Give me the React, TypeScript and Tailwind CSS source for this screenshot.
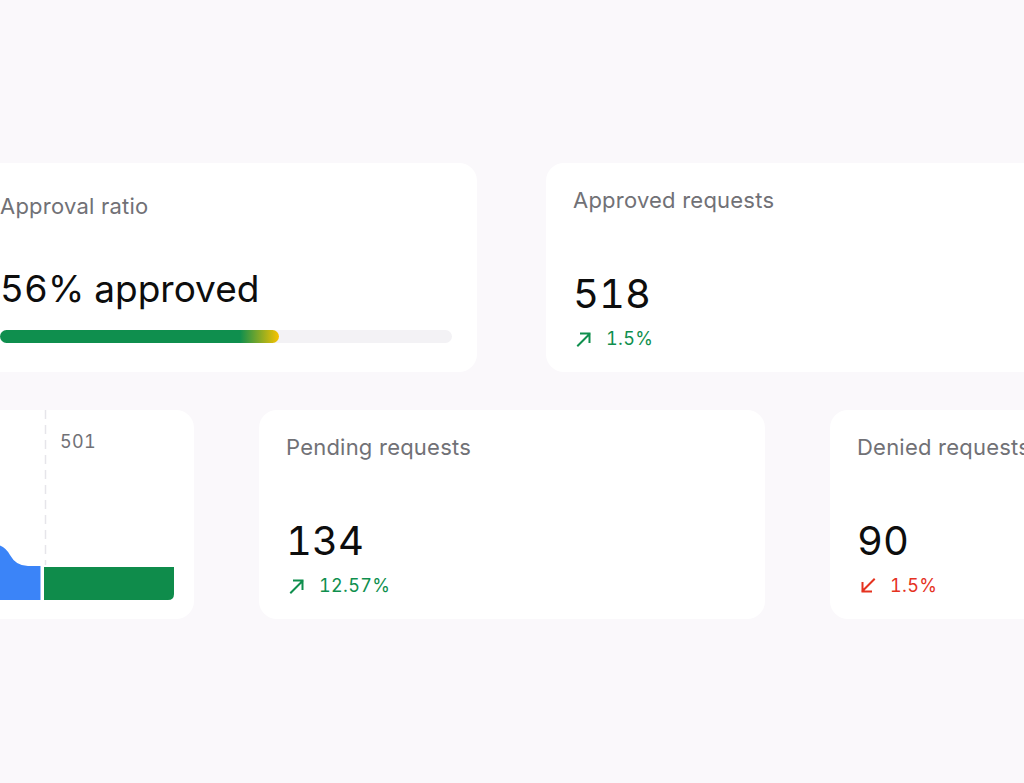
const font = { fontFamily: 'Inter, "Noto Sans", sans-serif' };

function UpArrow() {
  return (
    <svg width="16" height="16" viewBox="0 0 16 16" fill="none" stroke="currentColor" strokeWidth="2" strokeLinecap="square">
      <path d="M2 14.5 L13.5 3 M5 2.5 H13.5 V11" />
    </svg>
  );
}

function DownArrow() {
  return (
    <svg width="16" height="16" viewBox="0 0 16 16" fill="none" stroke="currentColor" strokeWidth="2" strokeLinecap="square">
      <path d="M14 1.5 L2.5 13 M2.5 5 V13.5 H11" />
    </svg>
  );
}

type StatProps = { title: string; value: string; change: string; up: boolean; width: string };

function StatCard({ title, value, change, up, width }: StatProps) {
  return (
    <div className={`${width} h-[209px] shrink-0 rounded-[18px] bg-white pl-[27px] pt-[23px] flex flex-col`}>
      <div className="text-[22px] leading-[28px] text-[#717176] tracking-[0.01em] whitespace-nowrap">{title}</div>
      <div className="mt-[56px] text-[40px] leading-[48px] text-[#0d0d0d] tabular-nums">{value}</div>
      <div className={`mt-[9px] flex items-center gap-[14px] text-[18px] leading-[24px] tracking-[0.02em] tabular-nums ${up ? 'text-[#0f8f4e]' : 'text-[#e5321f]'}`}>
        <span className="pl-[3px]">{up ? <UpArrow /> : <DownArrow />}</span>
        <span>{change}</span>
      </div>
    </div>
  );
}

function ChartCard() {
  return (
    <div className="w-[230px] h-[209px] shrink-0 rounded-[18px] bg-white relative overflow-hidden">
      <svg width="230" height="209" viewBox="0 0 230 209" className="block">
        <line x1="81.5" y1="0" x2="81.5" y2="155" stroke="#e6e5ea" strokeWidth="1.5" strokeDasharray="9 6" />
        <path d="M0 134 H28 Q40 134 46 145 Q52 156 64 156 H76.5 V190 H0 Z" fill="#3b84f8" />
        <path d="M80 157 H210 V184 Q210 190 204 190 H80 Z" fill="#0f8c4b" />
      </svg>
      <span className="absolute left-[96px] top-[20px] text-[18px] leading-[24px] text-[#717176] tracking-[0.02em] tabular-nums">501</span>
    </div>
  );
}

export default function App() {
  return (
    <div style={font} className="w-full h-[783px] bg-[#faf8fb] overflow-hidden pt-[163px]">
      <div className="flex gap-[69px] ml-[-28px]">
        <div className="w-[505px] h-[209px] shrink-0 rounded-[18px] bg-white pl-[28px] pr-[25px] pt-[29px] flex flex-col">
          <div className="text-[22px] leading-[28px] text-[#717176] tracking-[0.01em]">Approval ratio</div>
          <div className="mt-[45px] text-[37px] leading-[48px] text-[#0d0d0d] tabular-nums">56% approved</div>
          <div className="mt-[17px] h-[13px] w-full rounded-full bg-[#f3f2f5]">
            <div className="h-full w-[279px] rounded-full bg-[linear-gradient(90deg,#0f8f4e_0%,#0f8f4e_86%,#f8c300_100%)]" />
          </div>
        </div>
        <StatCard title="Approved requests" value="518" change="1.5%" up width="w-[506px]" />
      </div>
      <div className="flex gap-[65px] ml-[-36px] mt-[38px]">
        <ChartCard />
        <StatCard title="Pending requests" value="134" change="12.57%" up width="w-[506px]" />
        <StatCard title="Denied requests" value="90" change="1.5%" up={false} width="w-[506px]" />
      </div>
    </div>
  );
}
